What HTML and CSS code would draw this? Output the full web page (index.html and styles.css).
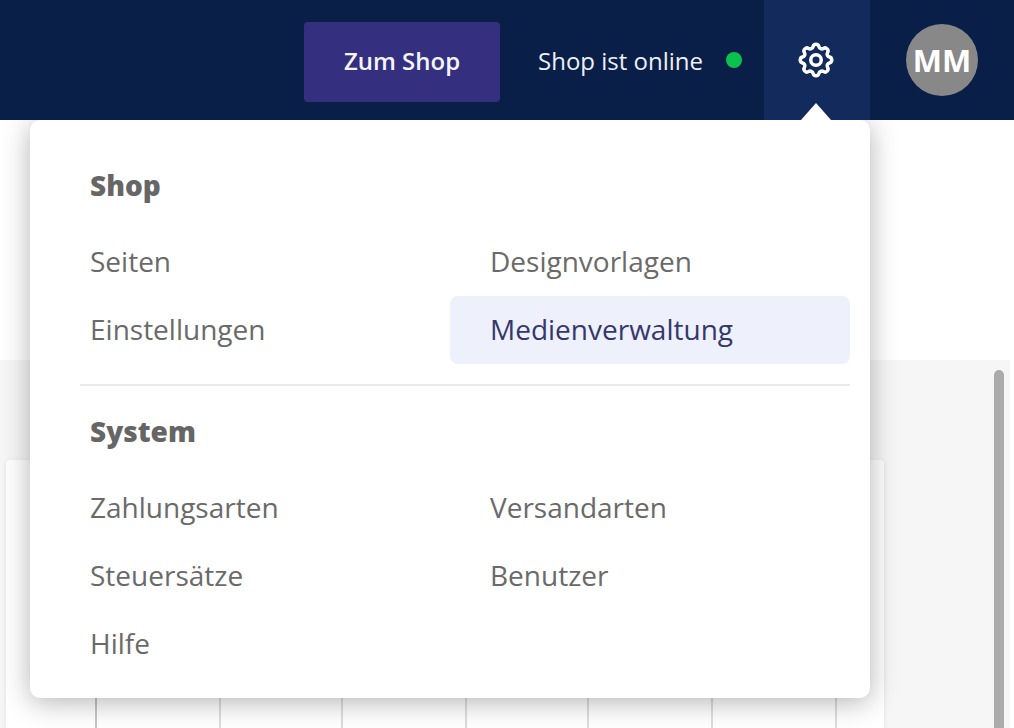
FILE: index.html
```html
<!DOCTYPE html>
<html lang="de">
<head>
<meta charset="utf-8">
<title>Shop</title>
<link rel="stylesheet" href="styles.css">
</head>
<body>
<header class="topbar">
  <a class="shop-btn">Zum Shop</a>
  <div class="status"><span>Shop ist online</span><i class="dot"></i></div>
  <div class="gear-tab">
    <svg class="gear" viewBox="0 0 24 24" width="42" height="42" fill="none" stroke="#fff" stroke-width="2" stroke-linecap="round" stroke-linejoin="round">
      <path d="M10.325 4.317c.426-1.756 2.924-1.756 3.35 0a1.724 1.724 0 002.573 1.066c1.543-.94 3.31.826 2.37 2.37a1.724 1.724 0 001.065 2.572c1.756.426 1.756 2.924 0 3.35a1.724 1.724 0 00-1.066 2.573c.94 1.543-.826 3.31-2.37 2.37a1.724 1.724 0 00-2.572 1.065c-.426 1.756-2.924 1.756-3.35 0a1.724 1.724 0 00-2.573-1.066c-1.543.94-3.31-.826-2.37-2.37a1.724 1.724 0 00-1.065-2.572c-1.756-.426-1.756-2.924 0-3.35a1.724 1.724 0 001.066-2.573c-.94-1.543.826-3.31 2.37-2.37.996.608 2.296.07 2.572-1.065z"/>
      <circle cx="12" cy="12" r="3"/>
    </svg>
    <span class="caret"></span>
  </div>
  <div class="avatar">MM</div>
</header>

<div class="page">
  <div class="hero"></div>
  <main class="content">
    <section class="card">
      <div class="cell"></div><div class="cell"></div><div class="cell"></div><div class="cell"></div>
      <div class="cell"></div><div class="cell"></div><div class="cell"></div>
    </section>
  </main>
</div>

<div class="scrollbar"></div>

<nav class="menu">
  <h2 class="menu-title">Shop</h2>
  <ul class="menu-grid">
    <li class="menu-item">Seiten</li>
    <li class="menu-item">Designvorlagen</li>
    <li class="menu-item">Einstellungen</li>
    <li class="menu-item is-active">Medienverwaltung</li>
  </ul>
  <hr class="menu-divider">
  <h2 class="menu-title">System</h2>
  <ul class="menu-grid">
    <li class="menu-item">Zahlungsarten</li>
    <li class="menu-item">Versandarten</li>
    <li class="menu-item">Steuersätze</li>
    <li class="menu-item">Benutzer</li>
    <li class="menu-item">Hilfe</li>
  </ul>
</nav>
</body>
</html>
```

FILE: styles.css
```css
* { box-sizing: border-box; }
html, body { height: 100%; }
body {
  margin: 0;
  height: 728px;
  overflow: hidden;
  position: relative;
  background: #fff;
  font-family: "Open Sans", sans-serif;
  color: #666;
}
.topbar {
  position: relative;
  z-index: 2;
  height: 120px;
  background: #0a1f47;
  display: flex;
  align-items: center;
  justify-content: flex-end;
  padding-right: 36px;
  color: #fff;
}
.shop-btn {
  width: 196px;
  height: 80px;
  margin: 4px 38px 0 0;
  border-radius: 4px;
  background: #352f7f;
  display: flex;
  align-items: center;
  justify-content: center;
  padding-bottom: 4px;
  font-size: 24px;
  font-weight: 600;
  color: #f4f4fb;
}
.status {
  display: flex;
  align-items: center;
  gap: 23px;
  margin-right: 22px;
  font-size: 24px;
  color: #edf0f6;
}
.dot {
  width: 16px;
  height: 16px;
  border-radius: 50%;
  background: #0cc24f;
}
.gear-tab {
  position: relative;
  width: 106px;
  height: 120px;
  background: #122b5c;
  display: flex;
  align-items: center;
  justify-content: center;
  padding-right: 2px;
  margin-right: 36px;
}
.caret {
  position: absolute;
  left: 37px;
  bottom: 0;
  border-left: 15px solid transparent;
  border-right: 15px solid transparent;
  border-bottom: 17px solid #fff;
}
.avatar {
  width: 72px;
  height: 72px;
  border-radius: 50%;
  background: #888;
  color: #fff;
  display: flex;
  align-items: center;
  justify-content: center;
  font-size: 31px;
  font-weight: 700;
}
.page {
  height: 608px;
  margin-right: 4px;
  display: flex;
  flex-direction: column;
}
.hero { height: 240px; background: #fff; flex: none; }
.content {
  flex: 1;
  background: #f6f6f6;
  padding: 100px 0 0 6px;
}
.card {
  width: 878px;
  height: 268px;
  background: #fff;
  border-radius: 4px 4px 0 0;
  box-shadow: 0 1px 4px rgba(0, 0, 0, .1);
  padding-left: 89px;
  display: grid;
  grid-template-columns: 124px 122px 124px 122px 124px 124px 42px;
}
.cell { border-left: 2px solid #ddd; }
.cell:first-child { border-left-color: #c6c6c6; }
.scrollbar {
  position: absolute;
  left: 994px;
  top: 370px;
  width: 10px;
  height: 358px;
  border-radius: 5px 5px 0 0;
  background: #ababab;
}
.menu {
  position: absolute;
  left: 30px;
  top: 120px;
  width: 840px;
  height: 578px;
  padding: 48px 20px 20px;
  background: #fff;
  border-radius: 10px;
  box-shadow: 0 4px 28px rgba(0, 0, 0, .3);
}
.menu-title {
  height: 36px;
  margin: 0 0 24px;
  padding: 0 0 2px 40px;
  font-size: 28px;
  line-height: 34px;
  font-weight: 800;
  color: #666;
}
.menu-grid {
  list-style: none;
  margin: 0;
  padding: 0;
  display: grid;
  grid-template-columns: 400px 400px;
}
.menu-item {
  height: 68px;
  padding: 0 0 2px 40px;
  display: flex;
  align-items: center;
  font-size: 28px;
  color: #6a6a6a;
  border-radius: 8px;
}
.is-active {
  background: #eef0fc;
  color: #35386a;
}
.menu-divider {
  margin: 20px 0 28px 30px;
  width: 770px;
  height: 2px;
  border: 0;
  background: #eaeaea;
}
```
